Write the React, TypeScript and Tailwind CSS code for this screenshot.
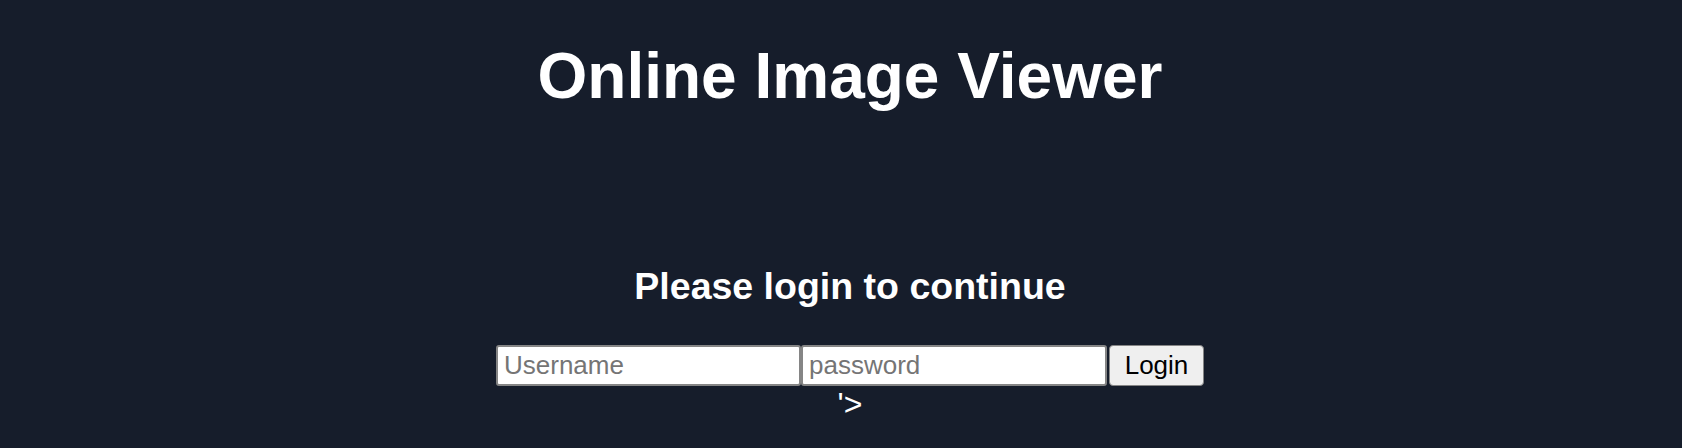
import React from 'react';

const App = () => {
  return (
    <div
      className="min-h-[448px] w-full bg-[#161d2b] pl-[18px] text-white"
      style={{ fontFamily: '"Liberation Sans", Arial, Helvetica, sans-serif' }}
    >
      <div className="flex flex-col items-center">
        <h1 className="mt-[44px] text-[64px] font-bold leading-none">Online Image Viewer</h1>

        <h2 className="mt-[160px] text-[37.5px] font-bold leading-none">Please login to continue</h2>

        <form className="mt-[39px] flex items-center gap-0" onSubmit={(e) => e.preventDefault()}>
          <input
            type="text"
            placeholder="Username"
            className="h-[41px] w-[305px] rounded-[3px] border-2 border-[#858585] bg-white px-[6px] text-[26px] text-black placeholder:text-[#757575]"
          />
          <input
            type="password"
            placeholder="password"
            className="h-[41px] w-[306px] rounded-[3px] border-2 border-[#858585] bg-white px-[6px] text-[26px] text-black placeholder:text-[#757575]"
          />
          <button
            type="submit"
            className="ml-[2px] h-[41px] w-[95px] rounded-[4px] border border-[#858585] bg-[#efefef] text-[26px] text-black"
          >
            Login
          </button>
        </form>
        {/* stray markup text left in the page */}
        <p className="mt-[2px] text-[32px] leading-none">'&gt;</p>
      </div>
    </div>
  );
};

export default App;
